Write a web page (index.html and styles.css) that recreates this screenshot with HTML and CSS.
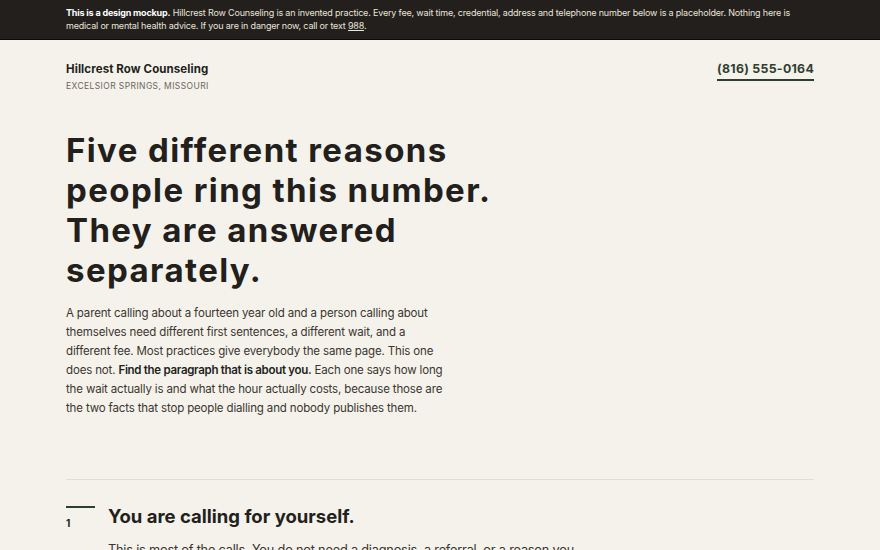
FILE: index.html
```html
<!DOCTYPE html>
<html lang="en">
<head>
<meta charset="utf-8">
<title>Hillcrest Row Counseling</title>
<link rel="stylesheet" href="styles.css">
</head>
<body>
<div class="notice">
  <p><strong>This is a design mockup.</strong> Hillcrest Row Counseling is an invented practice. Every fee, wait time, credential, address and telephone number below is a placeholder. Nothing here is medical or mental health advice. If you are in danger now, call or text <a href="#">988</a>.</p>
</div>
<div class="page">
  <header class="masthead">
    <div class="brand">
      <div class="brand-name">Hillcrest Row Counseling</div>
      <div class="brand-place">Excelsior Springs, Missouri</div>
    </div>
    <a class="phone" href="#">(816) 555-0164</a>
  </header>
  <section class="intro">
    <h1>Five different reasons people ring this number. They are answered separately.</h1>
    <p>A parent calling about a fourteen year old and a person calling about themselves need different first sentences, a different wait, and a different fee. Most practices give everybody the same page. This one does not. <strong>Find the paragraph that is about you.</strong> Each one says how long the wait actually is and what the hour actually costs, because those are the two facts that stop people dialling and nobody publishes them.</p>
  </section>
  <section class="reason">
    <div class="reason-num">1</div>
    <div class="reason-body">
      <h2>You are calling for yourself.</h2>
      <p>This is most of the calls. You do not need a diagnosis, a referral, or a reason you can explain well. Say that you would like to talk to someone and we will take it from there.</p>
    </div>
  </section>
</div>
</body>
</html>
```
FILE: styles.css
```css
* { box-sizing: border-box; }
html, body { margin: 0; padding: 0; }
body {
  background: #f5f2eb;
  color: #221f1c;
  font-family: Inter, "Open Sans", sans-serif;
}
.notice {
  background: #221f1c;
  color: #e9e4da;
  padding: 6px 66px 7px;
  border-bottom: 1px solid #0e0c0b;
}
.notice p {
  margin: 0;
  font-size: 9px;
  letter-spacing: -0.18px;
  line-height: 13px;
  max-width: 730px;
}
.notice strong { color: #fff; font-weight: 700; }
.notice a { color: #e9e4da; text-decoration: underline; }
.page { padding: 0 66px; }
.masthead {
  display: flex;
  justify-content: space-between;
  align-items: flex-start;
  padding-top: 21px;
}
.brand-name {
  font-size: 11.5px;
  font-weight: 700;
  letter-spacing: 0.1px;
  line-height: 16px;
}
.brand-place {
  margin-top: 3px;
  font-size: 8.5px;
  letter-spacing: 0.4px;
  text-transform: uppercase;
  color: #6b665f;
  line-height: 12px;
}
.phone {
  font-size: 12.3px;
  font-weight: 700;
  color: #2f3f2f;
  text-decoration: none;
  border-bottom: 2px solid #2f3f2f;
  padding-bottom: 3px;
  line-height: 15px;
  letter-spacing: 0.3px;
}
.intro {
  padding-top: 38px;
  padding-bottom: 61px;
  border-bottom: 1px solid #e2ded5;
}
.intro h1 {
  margin: 0;
  font-size: 33px;
  line-height: 40px;
  font-weight: 700;
  letter-spacing: 1.4px;
  max-width: 450px;
}
.intro p {
  margin: 14px 0 0;
  max-width: 385px;
  font-size: 11.5px;
  letter-spacing: -0.15px;
  line-height: 19px;
  color: #3a3530;
}
.intro p strong { color: #221f1c; font-weight: 600; letter-spacing: -0.3px; }
.reason {
  display: grid;
  grid-template-columns: 42px 1fr;
  padding-top: 26px;
}
.reason-num {
  border-top: 2px solid #2f3f2f;
  width: 29px;
  padding-top: 9px;
  font-size: 10px;
  font-weight: 700;
}
.reason-body h2 {
  margin: -2px 0 0;
  font-size: 18.5px;
  line-height: 24px;
  font-weight: 700;
}
.reason-body p {
  margin: 12px 0 0;
  max-width: 480px;
  font-size: 12.75px;
  letter-spacing: -0.2px;
  line-height: 19px;
  color: #3a3530;
}
```
